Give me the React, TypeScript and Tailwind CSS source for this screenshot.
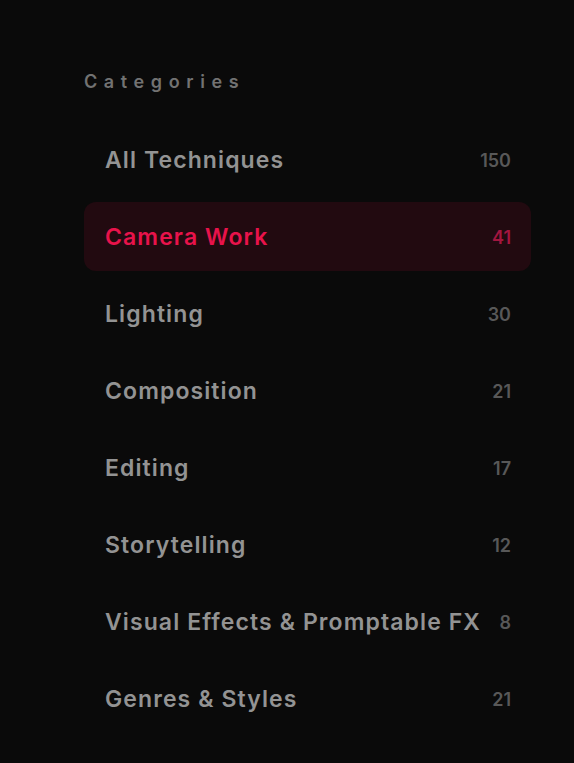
import React from "react";

const categories = [
  { name: "All Techniques", count: 150 },
  { name: "Camera Work", count: 41 },
  { name: "Lighting", count: 30 },
  { name: "Composition", count: 21 },
  { name: "Editing", count: 17 },
  { name: "Storytelling", count: 12 },
  { name: "Visual Effects & Promptable FX", count: 8 },
  { name: "Genres & Styles", count: 21 },
];

export default function App() {
  const [active, setActive] = React.useState("Camera Work");

  return (
    <div
      className="min-h-screen bg-[#0a0a0a] pt-[71px] pl-[84px] pr-[43px]"
      style={{ fontFamily: "Inter, 'Open Sans', sans-serif" }}
    >
      <h2 className="text-[18px] font-semibold tracking-[6.6px] text-[#727272] leading-[22px]">
        Categories
      </h2>
      <ul className="mt-[32px] flex flex-col gap-2">
        {categories.map((c) => {
          const isActive = c.name === active;
          return (
            <li key={c.name}>
              <button
                onClick={() => setActive(c.name)}
                className={
                  isActive
                    ? "flex h-[69px] w-full items-center justify-between rounded-xl bg-[#220a10] pl-[21px] pr-[20px] pt-px text-left"
                    : "flex h-[69px] w-full items-center justify-between rounded-xl pl-[21px] pr-[20px] pt-px text-left"
                }
              >
                <span
                  className={
                    isActive
                      ? "text-[23px] font-semibold tracking-[1.1px] text-[#e8134b]"
                      : "text-[23px] font-semibold tracking-[1.1px] text-[#939393]"
                  }
                >
                  {c.name}
                </span>
                <span
                  className={
                    isActive
                      ? "text-[18px] font-semibold text-[#a3163f]"
                      : "text-[18px] font-semibold text-[#585858]"
                  }
                >
                  {c.count}
                </span>
              </button>
            </li>
          );
        })}
      </ul>
    </div>
  );
}
